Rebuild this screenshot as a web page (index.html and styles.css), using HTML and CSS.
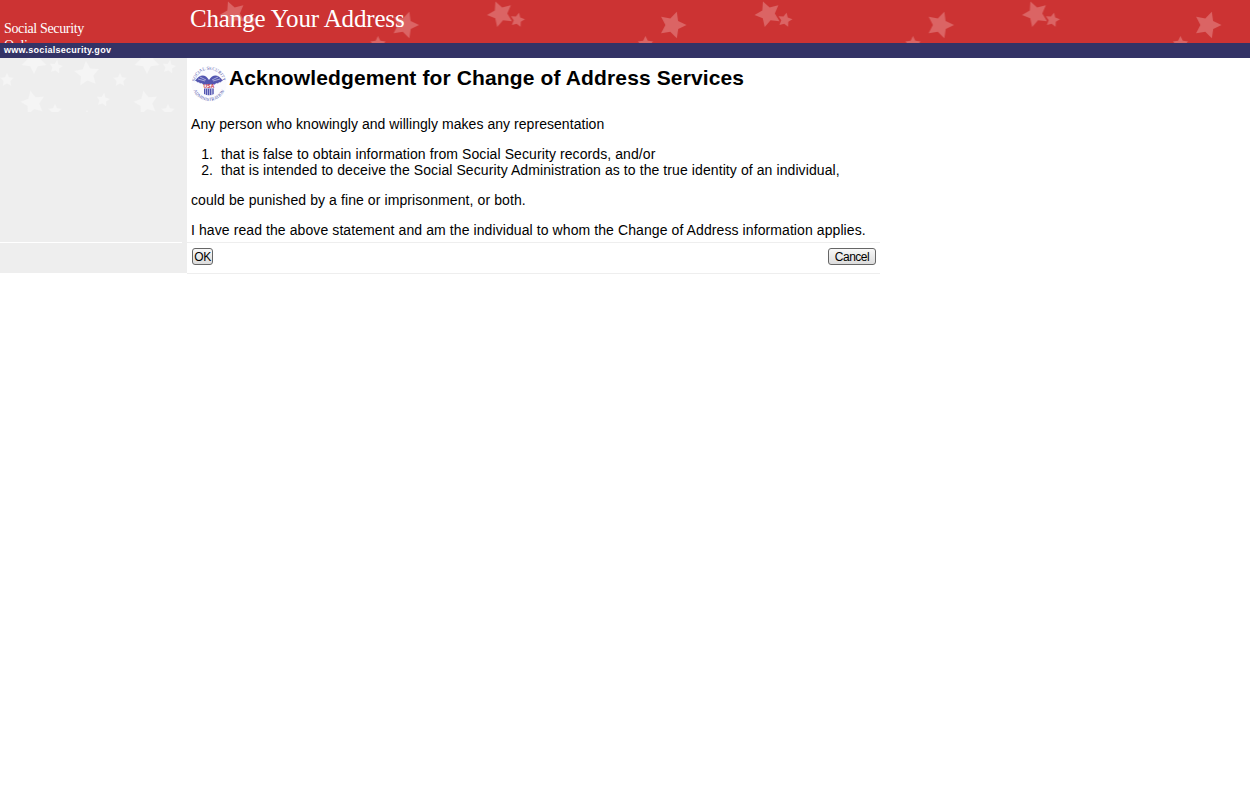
FILE: index.html
```html
<!DOCTYPE html>
<html lang="en">
<head>
    <meta charset="UTF-8">
    <title>Change Your Address</title>
    <link rel="stylesheet" href="styles.css">
</head>
<body>
    <svg class="defs" width="0" height="0">
        <defs>
            <polygon id="star" points="0,-1 0.29,-0.4 0.95,-0.31 0.48,0.15 0.59,0.81 0,0.5 -0.59,0.81 -0.48,0.15 -0.95,-0.31 -0.29,-0.4"/>
            <pattern id="red-stars" patternUnits="userSpaceOnUse" width="267.5" height="43">
                <g fill="#db6464">
                    <use href="#star" transform="translate(46,14) rotate(-22) scale(13.5)"/>
                    <use href="#star" transform="translate(63,20) rotate(12) scale(7.5)"/>
                    <use href="#star" transform="translate(218,25) rotate(18) scale(14)"/>
                    <use href="#star" transform="translate(191,44) rotate(0) scale(8)"/>
                </g>
            </pattern>
            <pattern id="gray-stars" patternUnits="userSpaceOnUse" width="113" height="54">
                <g fill="#f5f5f5">
                    <use href="#star" transform="translate(34,3) rotate(180) scale(13)"/>
                    <use href="#star" transform="translate(56,9) rotate(10) scale(7)"/>
                    <use href="#star" transform="translate(87,16) rotate(-5) scale(13)"/>
                    <use href="#star" transform="translate(7,22) rotate(0) scale(7)"/>
                    <use href="#star" transform="translate(33,45) rotate(-12) scale(12.5)"/>
                    <use href="#star" transform="translate(103,42) rotate(10) scale(7)"/>
                    <use href="#star" transform="translate(55,53) rotate(0) scale(7)"/>
                    <use href="#star" transform="translate(87,62) rotate(0) scale(10)"/>
                </g>
            </pattern>
        </defs>
    </svg>

    <div class="page">
        <div class="banner">
            <svg class="banner-stars" width="1063" height="43"><rect width="1063" height="43" fill="url(#red-stars)"/></svg>
            <div class="site-name">Social Security Online</div>
            <h1 class="page-title">Change Your Address</h1>
        </div>
        <div class="url-bar">www.socialsecurity.gov</div>

        <div class="columns">
            <div class="sidebar">
                <div class="sidebar-top">
                    <svg class="sidebar-stars" width="187" height="54"><rect width="187" height="54" fill="url(#gray-stars)"/></svg>
                </div>
            </div>

            <div class="content">
                <div class="content-body">
                    <div class="heading">
                        <svg class="seal" width="36" height="36" viewBox="0 0 36 36">
                            <defs>
                                <path id="seal-top" d="M3.6,18 A14.4,14.4 0 0 1 32.4,18"/>
                                <path id="seal-bottom" d="M1.2,18 A16.8,16.8 0 0 0 34.8,18"/>
                            </defs>
                            <circle cx="18" cy="18" r="17.5" fill="#fbfbfe"/>
                            <text class="seal-text"><textPath href="#seal-top" startOffset="50%" text-anchor="middle">SOCIAL SECURITY</textPath></text>
                            <text class="seal-text"><textPath href="#seal-bottom" startOffset="50%" text-anchor="middle">ADMINISTRATION</textPath></text>
                            <path d="M18,14 C14,8 9,8 4,15 C5.500,15 6,15.500 6.500,16.500 C7.500,16 8.500,16.500 9,17.500 C10.500,17 11.500,17.500 12,18.500 L24,18.500 C24.500,17.500 25.500,17 27,17.500 C27.500,16.500 28.500,16 29.500,16.500 C30,15.500 30.500,15 32,15 C27,8 22,8 18,14 Z" fill="#5356b0"/>
                            <path d="M7,13 L14,15 M9,11 L15,14 M29,13 L22,15 M27,11 L21,14" stroke="#e4e4f4" stroke-width="0.6"/>
                            <text class="seal-usa" x="18" y="21.800" text-anchor="middle">USA</text>
                            <path d="M13,22.500 H23 V28 Q18,30.500 13,28 Z" fill="#5356b0"/>
                            <path d="M14.500,22.500 V29 M16.500,22.500 V30 M18.500,22.500 V30 M20.500,22.500 V30 M22,22.500 V29" stroke="#e8e8f6" stroke-width="0.6"/>
                        </svg>
                        <h2>Acknowledgement for Change of Address Services</h2>
                    </div>
                    <p class="lead">Any person who knowingly and willingly makes any representation</p>
                    <ol>
                        <li>that is false to obtain information from Social Security records, and/or</li>
                        <li>that is intended to deceive the Social Security Administration as to the true identity of an individual,</li>
                    </ol>
                    <p>could be punished by a fine or imprisonment, or both.</p>
                    <p>I have read the above statement and am the individual to whom the Change of Address information applies.</p>
                </div>
                <form class="button-row">
                    <button type="button" class="btn btn-ok">OK</button>
                    <button type="button" class="btn btn-cancel">Cancel</button>
                </form>
            </div>
        </div>
    </div>
</body>
</html>
```

FILE: styles.css
```css
body {
    margin: 0;
    background-color: #fff;
    font-family: "Liberation Sans", Arial, sans-serif;
    font-size: 14px;
    color: #000;
}
.defs {
    position: absolute;
}
.page {
    width: 1250px;
}
.banner {
    position: relative;
    display: flex;
    height: 43px;
    overflow: hidden;
    background-color: #cc3333;
}
.banner-stars {
    position: absolute;
    top: 0;
    left: 187px;
}
.site-name {
    position: relative;
    width: 183px;
    box-sizing: border-box;
    padding: 20px 60px 0 4px;
    font-family: "Liberation Serif", Georgia, serif;
    font-size: 14px;
    line-height: 17px;
    letter-spacing: -0.35px;
    color: #fff;
}
.page-title {
    position: relative;
    margin: 4px 0 0 7px;
    font-family: "Liberation Serif", Georgia, serif;
    font-size: 25px;
    line-height: 30px;
    letter-spacing: -0.15px;
    font-weight: normal;
    color: #fff;
}
.url-bar {
    height: 15px;
    padding-left: 4px;
    background-color: #333366;
    font-size: 9px;
    line-height: 15px;
    letter-spacing: 0.28px;
    font-weight: bold;
    color: #fff;
}
.columns {
    display: flex;
}
.sidebar {
    width: 187px;
    height: 215px;
    background-color: #eee;
}
.sidebar-top {
    height: 184px;
    margin-right: 5px;
    border-bottom: 1px solid #fff;
}
.sidebar-stars {
    display: block;
}
.content {
    width: 693px;
    height: 216px;
    box-sizing: border-box;
    border-bottom: 1px solid #eee;
}
.content-body {
    height: 185px;
    box-sizing: border-box;
    padding: 7px 0 0 4px;
    border-bottom: 1px solid #eee;
    letter-spacing: 0.09px;
}
.heading {
    display: flex;
    align-items: flex-start;
    gap: 2px;
    height: 51px;
}
.seal {
    display: block;
    flex: none;
    margin-top: 1px;
}
.seal-text {
    font-family: "Liberation Serif", serif;
    font-size: 4.4px;
    fill: #4a4da6;
}
.seal-usa {
    font-family: "Liberation Sans", sans-serif;
    font-size: 5px;
    font-weight: bold;
    fill: #c8283c;
}
.heading h2 {
    margin: 0;
    font-size: 21px;
    line-height: 26px;
    letter-spacing: 0.13px;
    font-weight: bold;
}
.content-body p {
    margin: 0 0 14px;
    line-height: 16px;
}
.content-body .lead {
    letter-spacing: 0.05px;
}
.content-body ol {
    margin: 0 0 14px;
    padding-left: 30px;
    line-height: 16px;
}
.content-body li::marker {
    content: counter(list-item) ".  ";
    white-space: pre;
}
.button-row {
    display: flex;
    justify-content: space-between;
    padding: 5px 4px 0 5px;
}
.btn {
    height: 17px;
    padding: 0;
    border: 1px solid #666;
    border-radius: 3px;
    background: linear-gradient(#f8f8f8, #dcdcdc);
    font-family: "Liberation Sans", Arial, sans-serif;
    font-size: 12px;
    line-height: 14px;
    letter-spacing: -0.5px;
    color: #000;
}
.btn-ok {
    width: 21px;
}
.btn-cancel {
    width: 48px;
}
```
